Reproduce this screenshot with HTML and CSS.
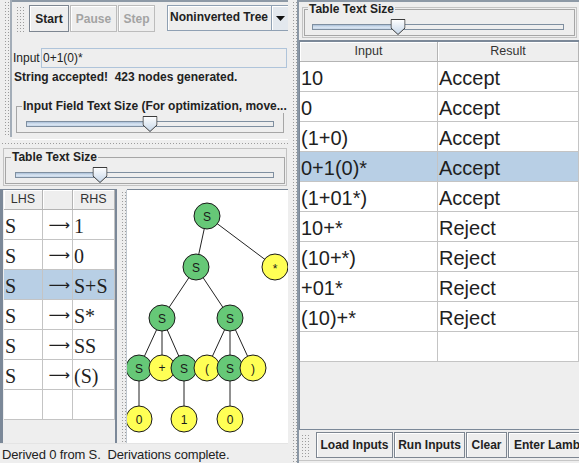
FILE: index.html
```html
<!DOCTYPE html>
<html>
<head>
<meta charset="utf-8">
<link rel="stylesheet" href="styles.css">
</head>
<body>
<div class="app">
  <div class="left">
    <div class="top">
      <div class="lstrip"><div class="dots lstrip-dots"></div><div class="lstrip-edge"></div></div>
      <div class="topmain">
        <div class="toolbar">
          <div class="dots grip"></div>
          <button class="btn b-start">Start</button>
          <button class="btn dis b-pause">Pause</button>
          <button class="btn dis b-step">Step</button>
          <div class="combo">
            <div class="combo-text">Noninverted Tree</div>
            <div class="combo-arrow"><svg width="9" height="5" viewBox="0 0 9 5"><path d="M0 0H9L4.5 5Z" fill="#111"/></svg></div>
          </div>
        </div>
        <div class="inputrow"><span class="lbl">Input</span><div class="field">0+1(0)*</div></div>
        <div class="msg">String accepted!&nbsp; 423 nodes generated.</div>
        <fieldset class="titled tb1">
          <legend>Input Field Text Size (For optimization, move...</legend>
          <div class="slider s1">
            <div class="track"><div class="fill" style="width:50%"></div></div>
            <svg class="knob" style="left:50%" width="15" height="16" viewBox="0 0 15 16"><defs><linearGradient id="kg1" x1="0" y1="0" x2="0" y2="1"><stop offset="0" stop-color="#ffffff"/><stop offset="1" stop-color="#c4d5e8"/></linearGradient></defs><path d="M0.5 0.5H14.5V9L7.5 15.5L0.5 9Z" fill="url(#kg1)" stroke="#3b3b3b"/></svg>
          </div>
        </fieldset>
      </div>
    </div>
    <div class="hdiv"><div class="dots hdiv-dots"></div></div>
    <div class="ttsL">
      <fieldset class="titled tb2">
        <legend>Table Text Size</legend>
        <div class="slider s2">
          <div class="track"><div class="fill" style="width:33%"></div></div>
          <svg class="knob" style="left:33%" width="15" height="16" viewBox="0 0 15 16"><defs><linearGradient id="kg2" x1="0" y1="0" x2="0" y2="1"><stop offset="0" stop-color="#ffffff"/><stop offset="1" stop-color="#c4d5e8"/></linearGradient></defs><path d="M0.5 0.5H14.5V9L7.5 15.5L0.5 9Z" fill="url(#kg2)" stroke="#3b3b3b"/></svg>
        </div>
      </fieldset>
    </div>
    <div class="mid">
      <div class="gram">
        <div class="gtable">
          <div class="gh">LHS</div><div class="gh"></div><div class="gh">RHS</div>
          <div class="gc">S</div><div class="gc arr">⟶</div><div class="gc">1</div>
          <div class="gc">S</div><div class="gc arr">⟶</div><div class="gc">0</div>
          <div class="gc sel">S</div><div class="gc arr sel">⟶</div><div class="gc sel">S+S</div>
          <div class="gc">S</div><div class="gc arr">⟶</div><div class="gc">S*</div>
          <div class="gc">S</div><div class="gc arr">⟶</div><div class="gc">SS</div>
          <div class="gc">S</div><div class="gc arr">⟶</div><div class="gc">(S)</div>
          <div class="gc"></div><div class="gc"></div><div class="gc"></div>
        </div>
      </div>
      <div class="vsplit-s"><div class="dots vsplit-s-dots"></div><div class="vsplit-s-edge"></div></div>
      <div class="tree">
        <svg width="161" height="253" viewBox="0 0 161 253" font-family="Liberation Sans, Arial, sans-serif" font-size="12">
          <g stroke="#222" stroke-width="1">
            <line x1="80" y1="26" x2="69" y2="77"/>
            <line x1="80" y1="26" x2="148" y2="77"/>
            <line x1="69" y1="77" x2="35" y2="128"/>
            <line x1="69" y1="77" x2="103" y2="128"/>
            <line x1="35" y1="128" x2="12" y2="178"/>
            <line x1="35" y1="128" x2="35" y2="178"/>
            <line x1="35" y1="128" x2="57" y2="178"/>
            <line x1="103" y1="128" x2="80" y2="178"/>
            <line x1="103" y1="128" x2="103" y2="178"/>
            <line x1="103" y1="128" x2="126" y2="178"/>
            <line x1="12" y1="178" x2="12" y2="229"/>
            <line x1="57" y1="178" x2="57" y2="229"/>
            <line x1="103" y1="178" x2="103" y2="229"/>
          </g>
          <g stroke="#1a1a1a" stroke-width="1">
            <circle cx="80" cy="26" r="13" fill="#66c877"/>
            <circle cx="69" cy="77" r="13" fill="#66c877"/>
            <circle cx="148" cy="77" r="13" fill="#ffff55"/>
            <circle cx="35" cy="128" r="13" fill="#66c877"/>
            <circle cx="103" cy="128" r="13" fill="#66c877"/>
            <circle cx="12" cy="178" r="13" fill="#66c877"/>
            <circle cx="35" cy="178" r="13" fill="#ffff55"/>
            <circle cx="57" cy="178" r="13" fill="#66c877"/>
            <circle cx="80" cy="178" r="13" fill="#ffff55"/>
            <circle cx="103" cy="178" r="13" fill="#66c877"/>
            <circle cx="126" cy="178" r="13" fill="#ffff55"/>
            <circle cx="12" cy="229" r="13" fill="#ffff55"/>
            <circle cx="57" cy="229" r="13" fill="#ffff55"/>
            <circle cx="103" cy="229" r="13" fill="#ffff55"/>
          </g>
          <g fill="#1a1a1a" text-anchor="middle">
            <text x="80" y="30.5">S</text>
            <text x="69" y="81.5">S</text>
            <text x="148" y="83">*</text>
            <text x="35" y="132.5">S</text>
            <text x="103" y="132.5">S</text>
            <text x="12" y="182.5">S</text>
            <text x="35" y="182">+</text>
            <text x="57" y="182.5">S</text>
            <text x="80" y="182.5">(</text>
            <text x="103" y="182.5">S</text>
            <text x="126" y="182.5">)</text>
            <text x="12" y="233.5">0</text>
            <text x="57" y="233.5">1</text>
            <text x="103" y="233.5">0</text>
          </g>
        </svg>
      </div>
    </div>
    <div class="status">Derived 0 from S.&nbsp; Derivations complete.</div>
  </div>
  <div class="vsplit"><div class="dots vsplit-dots"></div><div class="vsplit-edge"></div></div>
  <div class="right">
    <div class="rtts">
      <fieldset class="titled tb3">
        <legend>Table Text Size</legend>
        <div class="slider s3">
          <div class="track"><div class="fill" style="width:34%"></div></div>
          <svg class="knob" style="left:34%" width="15" height="16" viewBox="0 0 15 16"><defs><linearGradient id="kg3" x1="0" y1="0" x2="0" y2="1"><stop offset="0" stop-color="#ffffff"/><stop offset="1" stop-color="#c4d5e8"/></linearGradient></defs><path d="M0.5 0.5H14.5V9L7.5 15.5L0.5 9Z" fill="url(#kg3)" stroke="#3b3b3b"/></svg>
        </div>
      </fieldset>
    </div>
    <div class="rpane">
      <div class="rtable">
        <div class="rh">Input</div><div class="rh">Result</div>
        <div class="rc">10</div><div class="rc">Accept</div>
        <div class="rc">0</div><div class="rc">Accept</div>
        <div class="rc">(1+0)</div><div class="rc">Accept</div>
        <div class="rc sel">0+1(0)*</div><div class="rc sel">Accept</div>
        <div class="rc">(1+01*)</div><div class="rc">Accept</div>
        <div class="rc">10+*</div><div class="rc">Reject</div>
        <div class="rc">(10+*)</div><div class="rc">Reject</div>
        <div class="rc">+01*</div><div class="rc">Reject</div>
        <div class="rc">(10)+*</div><div class="rc">Reject</div>
        <div class="rc"></div><div class="rc"></div>
      </div>
    </div>
    <div class="bbar">
      <div class="dots bgrip"></div>
      <button class="btn b-load">Load Inputs</button>
      <button class="btn b-run">Run Inputs</button>
      <button class="btn b-clear">Clear</button>
      <button class="btn b-lambda">Enter Lambda</button>
    </div>
  </div>
</div>
</body>
</html>
```

FILE: styles.css
```css
* { box-sizing: border-box; }
html, body { margin: 0; padding: 0; }
body {
  width: 579px;
  height: 463px;
  overflow: hidden;
  background: #eeeeee;
  font-family: "Liberation Sans", Arial, sans-serif;
  font-size: 12px;
  color: #222222;
}
.app { display: flex; width: 579px; height: 463px; }

.dots {
  background-color: #eeeeee;
  background-image:
    linear-gradient(to right, #eeeeee 2px, transparent 2px),
    linear-gradient(to bottom, #eeeeee 2px, #9c9c9c 2px);
  background-size: 3px 3px;
}

/* ---------- left column ---------- */
.left { width: 288px; flex: none; display: flex; flex-direction: column; }
.top { height: 140px; flex: none; display: flex; }
.lstrip { width: 12px; flex: none; display: flex; padding: 0 0 3px 3px; }
.lstrip-dots { width: 6px; }
.lstrip-edge { width: 2px; margin-left: 1px; background: #a3adb8; }
.topmain {
  flex: 1; min-width: 0; overflow: hidden;
  display: flex; flex-direction: column;
  border-top: 2px solid #8d99a6;
  border-bottom: 1px solid #ffffff;
}
.toolbar { height: 35px; flex: none; display: flex; align-items: flex-start; padding: 3px 0 0 3px; }
.grip { width: 10px; height: 28px; margin-right: 4px; flex: none; }

.btn {
  font-family: "Liberation Sans", Arial, sans-serif;
  font-weight: bold;
  font-size: 12px;
  color: #222222;
  height: 27px;
  margin: 0;
  padding: 0;
  flex: none;
  border: 1px solid #7d8691;
  box-shadow: inset 1px 1px 0 #ffffff;
  background: #eeeeee;
  display: flex; align-items: center; justify-content: center;
  white-space: nowrap;
}
.btn.dis { color: #a3a3a3; border-color: #bcbcbc; }
.b-start { width: 40px; }
.b-pause { width: 47px; margin-left: 1px; }
.b-step { width: 37px; margin-left: 1px; }

.combo {
  flex: none; width: 123px; height: 26px; margin-left: 12px;
  display: flex;
  border: 1px solid #8fa0b3;
  background: #eeeeee;
}
.combo-text {
  width: 104px; flex: none;
  font-weight: bold; line-height: 23px;
  padding-left: 2px;
  border-right: 1px solid #8fa0b3;
  box-shadow: inset 1px 1px 0 #ffffff;
  white-space: nowrap; overflow: hidden;
}
.combo-arrow {
  flex: 1;
  display: flex; align-items: center; justify-content: center;
  padding-right: 1px;
  background: #e3e8ee;
  box-shadow: inset 1px 1px 0 #ffffff;
}

.inputrow { display: flex; align-items: center; height: 20px; margin-top: 11px; padding-left: 1px; flex: none; }
.lbl { width: 28px; flex: none; font-size: 12px; }
.field {
  flex: 1; height: 20px; margin-right: 1px;
  border: 1px solid #afc4da;
  padding-left: 1px;
  line-height: 18px;
  font-size: 12px;
  background: #eeeeee;
}
.msg { margin-top: 2px; height: 14px; line-height: 14px; font-weight: bold; padding-left: 2px; white-space: nowrap; flex: none; }

fieldset.titled {
  border: 1px solid #a6a6a6;
  min-width: 0;
}
fieldset.titled legend {
  font-weight: bold;
  font-size: 12px;
  line-height: 13px;
  padding: 0 1px;
  color: #222222;
  white-space: nowrap;
}
.tb1 { margin: 16px 4px 0 4px; padding: 0 5px 0 5px; flex: none; }

.slider { position: relative; height: 16px; padding-top: 5px; }
.track {
  height: 6px;
  border: 1px solid #7f8fa0;
  background: #eeeeee;
}
.fill {
  height: 100%;
  background: linear-gradient(to bottom, #a9bfd8 0, #dbe6f2 55%, #c5d6e9 100%);
}
.knob { position: absolute; top: 0; transform: translateX(-50%); display: block; }
.s1 { margin: 3px 4px 0 4px; }
.s2 { margin: 3px 5px 0 4px; }
.s3 { margin: 3px 7px 0 4px; }

.hdiv { height: 7px; padding: 1px 0; flex: none; }
.hdiv-dots { height: 5px; }

.ttsL {
  flex: none;
  height: 38px;
  margin: 1px 1px 2px 3px;
  border: 1px solid #c3c3c3;
  padding: 0 1px;
}
.tb2 { margin: 2px 0 0 0; padding: 0 5px; }

.mid { flex: 1; min-height: 0; display: flex; padding-top: 1px; }
.gram {
  width: 117px; flex: none;
  border-left: 3px solid #7b8898;
  border-right: 2px solid #7b8898;
  border-top: 1px solid #7b8898;
  padding-left: 1px;
  background: #eeeeee;
}
.gtable { display: grid; grid-template-columns: 39px 30px 42px; }
.gh {
  height: 20px;
  border-right: 1px solid #b4b4b4;
  border-bottom: 1px solid #b4b4b4;
  font-size: 12.5px;
  line-height: 19px;
  text-align: center;
  color: #333333;
  background: #eeeeee;
  box-shadow: inset 1px 1px 0 #ffffff;
}
.gc {
  height: 30px;
  border-right: 1px solid #c4c4c4;
  border-bottom: 1px solid #c4c4c4;
  font-family: "Liberation Serif", "Times New Roman", serif;
  font-size: 20px;
  line-height: 25px;
  padding: 4px 0 0 1px;
  background: #ffffff;
  color: #1f1f1f;
  white-space: nowrap;
}
.gc.arr {
  font-family: "DejaVu Sans", sans-serif;
  font-size: 15px;
  line-height: 22px;
  padding: 4px 2px 0 0;
  text-align: right;
  overflow: hidden;
}
.gc.sel, .rc.sel { background: #b8cfe5; }

.vsplit-s { width: 10px; flex: none; display: flex; padding-left: 3px; padding-top: 1px; }
.vsplit-s-dots { width: 6px; }
.vsplit-s-edge { width: 1px; background: #c0c8d0; }
.tree {
  flex: 1; min-width: 0;
  background: #ffffff;
  border-top: 1px solid #7b8898;
  overflow: hidden;
}
.tree svg { display: block; }

.status {
  height: 20px; flex: none;
  font-size: 13px;
  line-height: 20px;
  padding: 1px 0 0 2px;
  letter-spacing: -0.15px;
  white-space: nowrap;
  border-top: 1px solid #e4e4e4;
}

/* ---------- splitter ---------- */
.vsplit { width: 11px; flex: none; display: flex; padding-left: 3px; }
.vsplit-dots { width: 6px; }
.vsplit-edge { width: 2px; background: #8a97a5; }

/* ---------- right column ---------- */
.right {
  flex: 1; min-width: 0;
  display: flex; flex-direction: column;
  border-top: 2px solid #8d99a6;
  overflow: hidden;
}
.rtts {
  flex: none;
  margin: 5px 2px 0 3px;
  border: 1px solid #c3c3c3;
  padding: 0 1px 1px 1px;
}
.tb3 { margin: -5px 0 0 0; padding: 0 3px; }
.tb3 legend { background: #eeeeee; }

.rpane {
  flex: 1; min-height: 0;
  margin-top: 2px;
  border-top: 2px solid #7b8898;
  border-left: 1px solid #7b8898;
  border-bottom: 1px solid #7b8898;
  background: #eeeeee;
  overflow: hidden;
}
.rtable { display: grid; grid-template-columns: 138px 141px; }
.rh {
  height: 20px;
  border-right: 1px solid #b4b4b4;
  border-bottom: 1px solid #b4b4b4;
  font-size: 12.5px;
  line-height: 19px;
  text-align: center;
  color: #333333;
  background: #eeeeee;
  box-shadow: inset 1px 1px 0 #ffffff;
}
.rc {
  height: 30px;
  border-right: 1px solid #c4c4c4;
  border-bottom: 1px solid #c4c4c4;
  font-size: 20px;
  line-height: 26px;
  padding: 3px 0 0 1px;
  background: #ffffff;
  color: #1f1f1f;
  white-space: nowrap;
}

.bbar {
  flex: none;
  height: 31px;
  margin-bottom: 2px;
  display: flex;
  align-items: flex-start;
  padding: 2px 0 0 1px;
  border-bottom: 1px solid #c6c6c6;
}
.bgrip { width: 11px; height: 26px; margin: 1px 5px 0 0; flex: none; }
.bbar .btn { height: 26px; }
.b-load { width: 77px; }
.b-run { width: 71px; margin-left: 1px; }
.b-clear { width: 41px; margin-left: 1px; }
.b-lambda { width: 92px; margin-left: 1px; justify-content: flex-start; padding-left: 5px; }
```
